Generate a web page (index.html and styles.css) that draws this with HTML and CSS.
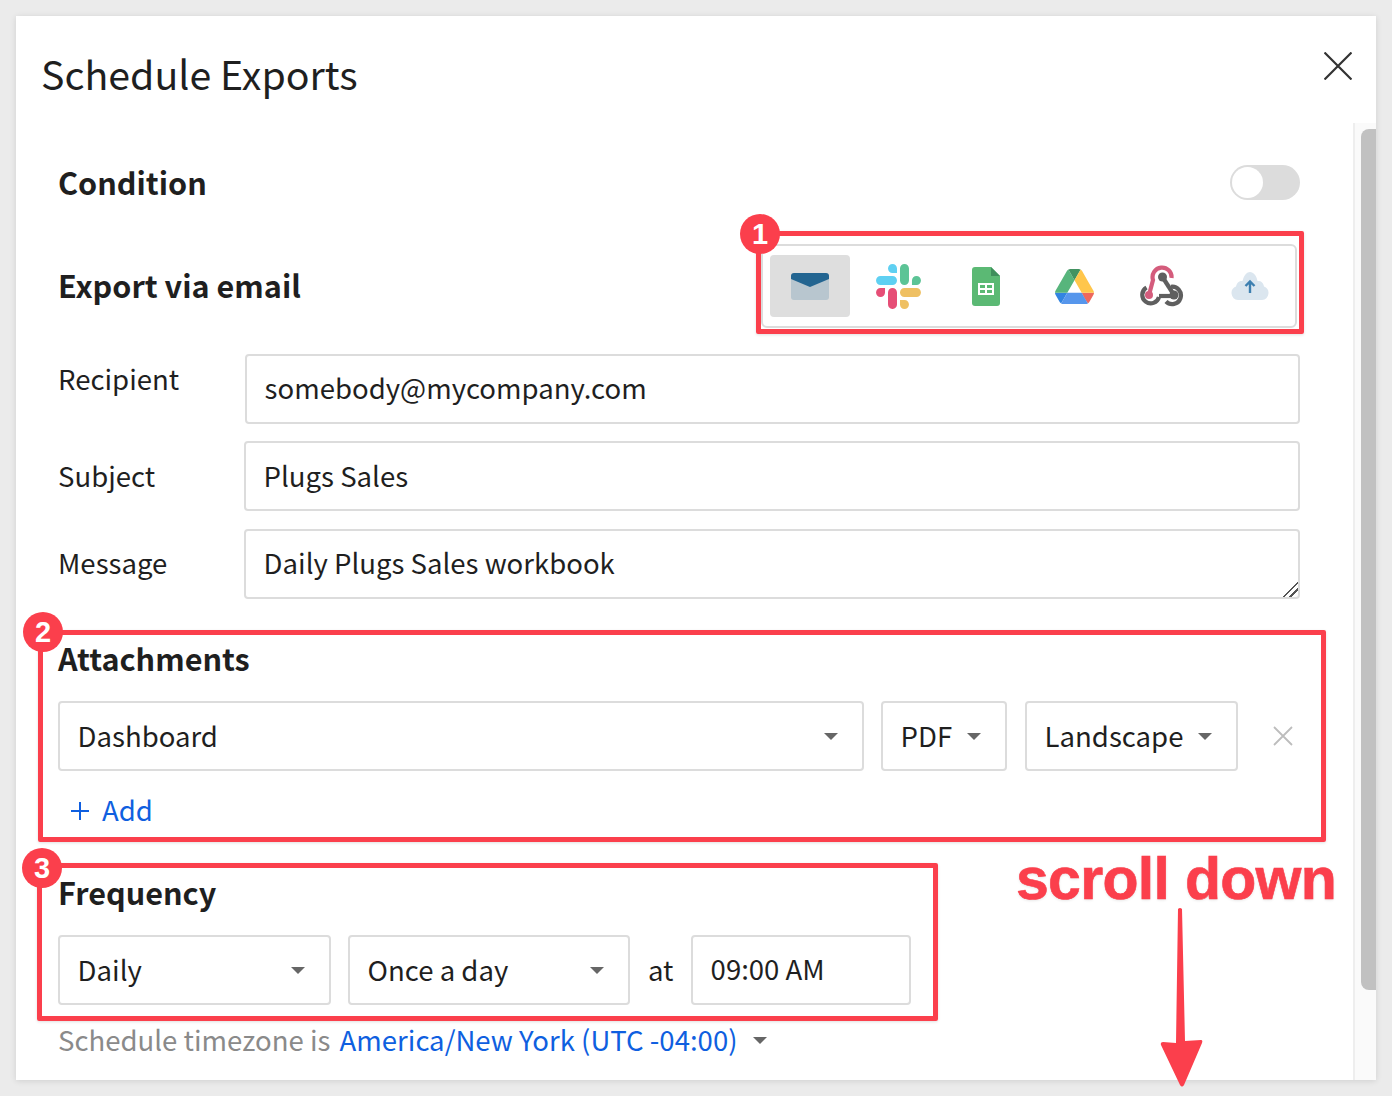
FILE: index.html
```html
<!DOCTYPE html>
<html lang="en">
<head>
  <meta charset="UTF-8" />
  <meta name="viewport" content="width=device-width, initial-scale=1.0" />
  <title>Schedule Exports</title>
  <link rel="stylesheet" href="styles.css">
</head>
<body>
  <div class="modal">
    <div class="modal-head">
      <h1>Schedule Exports</h1>
      <svg class="close" width="28" height="28" viewBox="0 0 28 28"><path d="M0.500 0.500L27.500 27.500M27.500 0.500L0.500 27.500" stroke="#333" stroke-width="2.2" fill="none"/></svg>
    </div>

    <div class="modal-body">
      <div class="content">
        <div class="row-between condition">
          <h2>Condition</h2>
          <div class="toggle"><span class="knob"></span></div>
        </div>

        <div class="row-between export-via">
          <h2>Export via email</h2>
          <div class="channels">
            <div class="channel active">
              <svg width="38" height="27" viewBox="0 0 38 27">
                <rect y="1" width="38" height="26" rx="3" fill="#b8c6cf"/>
                <path d="M3 0H35A3 3 0 0 1 38 3V6L19 14L0 6V3A3 3 0 0 1 3 0Z" fill="#236591"/>
              </svg>
            </div>
            <div class="channel">
              <svg width="45" height="45" viewBox="0 0 2448 2452" opacity="0.85">
                <path d="M897.4 0c-135.3.1-244.8 109.9-244.7 245.2-.1 135.3 109.5 245.1 244.8 245.2h244.8V245.3C1142.3 110 1032.7.2 897.4 0m0 654H244.8C109.5 654.1-.1 763.9 0 899.2c-.2 135.3 109.4 245.1 244.7 245.3h652.7c135.3-.1 244.9-109.9 244.8-245.2.1-135.4-109.5-245.2-244.8-245.3z" fill="#44c8f0"/>
                <path d="M2447.6 899.2c.1-135.3-109.5-245.1-244.8-245.2-135.3.1-244.9 109.9-244.8 245.2v245.3h244.8c135.3-.1 244.9-109.9 244.8-245.3zm-652.7 0V245.2c.1-135.2-109.4-245-244.7-245.2-135.3.1-244.9 109.9-244.8 245.2v654c-.2 135.3 109.4 245.1 244.7 245.3 135.3-.1 244.9-109.9 244.8-245.3z" fill="#40ba84"/>
                <path d="M1550.1 2452c135.3-.1 244.9-109.9 244.8-245.2.1-135.3-109.5-245.1-244.8-245.2h-244.8v245.2c-.1 135.2 109.5 245 244.8 245.2zm0-654.1h652.7c135.3-.1 244.9-109.9 244.8-245.2.2-135.3-109.4-245.1-244.7-245.3h-652.7c-135.3.1-244.9 109.9-244.8 245.2-.1 135.4 109.4 245.2 244.7 245.3z" fill="#edb648"/>
                <path d="M0 1553.2c-.1 135.3 109.5 245.1 244.8 245.2 135.3-.1 244.9-109.9 244.8-245.2v-245.2H244.8c-135.3.1-244.9 109.9-244.8 245.2zm652.7 0v654c-.2 135.3 109.4 245.1 244.7 245.3 135.3-.1 244.9-109.9 244.8-245.2v-653.9c.2-135.3-109.4-245.1-244.7-245.3-135.4 0-244.9 109.8-244.8 245.1z" fill="#e2305f"/>
              </svg>
            </div>
            <div class="channel">
              <svg width="28" height="39" viewBox="0 0 28 39">
                <path d="M3 0H19L28 9V36A3 3 0 0 1 25 39H3A3 3 0 0 1 0 36V3A3 3 0 0 1 3 0Z" fill="#5bb974"/>
                <path d="M19 0L28 9H19Z" fill="#3f8f5c"/>
                <path d="M6 16H22V28H6ZM8 18V21H13V18ZM15 18V21H20V18ZM8 23V26H13V23ZM15 23V26H20V23Z" fill="#fff" fill-rule="evenodd"/>
              </svg>
            </div>
            <div class="channel">
              <svg width="39" height="35" viewBox="0 0 87.3 78" opacity="0.8">
                <path d="m6.6 66.85 3.85 6.65c.8 1.4 1.95 2.5 3.3 3.3l13.75-23.8h-27.5c0 1.55.4 3.1 1.2 4.5z" fill="#0066da"/>
                <path d="m43.65 25-13.75-23.8c-1.35.8-2.5 1.9-3.3 3.3l-25.4 44a9.06 9.06 0 0 0 -1.2 4.5h27.5z" fill="#2ea35c"/>
                <path d="m73.55 76.8c1.35-.8 2.5-1.9 3.3-3.3l1.6-2.75 7.65-13.25c.8-1.4 1.2-2.95 1.2-4.5h-27.502l5.852 11.5z" fill="#ea4335"/>
                <path d="m43.65 25 13.75-23.8c-1.35-.8-2.9-1.2-4.5-1.2h-18.5c-1.6 0-3.15.45-4.5 1.2z" fill="#14783a"/>
                <path d="m59.8 53h-32.3l-13.75 23.8c1.35.8 2.9 1.2 4.5 1.2h50.8c1.6 0 3.15-.45 4.5-1.2z" fill="#2d7de8"/>
                <path d="m73.4 26.5-12.7-22c-.8-1.4-1.95-2.5-3.3-3.3l-13.75 23.8 16.15 28h27.45c0-1.55-.4-3.1-1.2-4.5z" fill="#ffb81f"/>
              </svg>
            </div>
            <div class="channel">
              <svg width="44" height="42" viewBox="0 0 44 42" fill="none" stroke-width="4.2">
                <path d="M31.500 13A9.500 9.500 0 1 0 13 15L9 30" stroke="#d45c7c"/>
                <path d="M22.500 12L34 30" stroke="#5f5f5f"/>
                <path d="M19 31H34" stroke="#5f5f5f"/>
                <path d="M6.500 22.500A8.500 8.500 0 1 0 19 32" stroke="#5f5f5f"/>
                <path d="M31 21.800A8.700 8.700 0 1 1 26 36.500" stroke="#5f5f5f"/>
                <circle cx="22.500" cy="12" r="4.500" fill="#5f5f5f"/>
                <circle cx="34" cy="30" r="4.500" fill="#5f5f5f"/>
                <circle cx="9" cy="30" r="4" fill="#d45c7c"/>
              </svg>
            </div>
            <div class="channel">
              <svg width="38" height="28" viewBox="0 0 38 28">
                <path d="M7 28A7 7 0 0 1 5 14.500C6 10 9 8.500 11.500 9C13 3 16 0 19 0C22.500 0 25.500 3.500 26.500 9C29.500 8.500 32.500 10.500 33 14.500A7 7 0 0 1 31 28Z" fill="#dbe6ef"/>
                <path d="M19 21V10M14.5 14L19 9.5L23.500 14" stroke="#3d7fb0" stroke-width="2.4" fill="none"/>
              </svg>
            </div>
          </div>
        </div>

        <div class="fields">
          <div class="field">
            <label class="raised" for="recipient">Recipient</label>
            <input id="recipient" type="text" value="somebody@mycompany.com" />
          </div>
          <div class="field">
            <label for="subject">Subject</label>
            <input id="subject" type="text" value="Plugs Sales" />
          </div>
          <div class="field message-row">
            <label for="message">Message</label>
            <textarea id="message">Daily Plugs Sales workbook</textarea>
          </div>
        </div>

        <h2 class="attachments-title">Attachments</h2>
        <div class="controls">
          <div class="select w-dashboard">Dashboard<span class="caret"></span></div>
          <div class="select w-pdf">PDF<span class="caret"></span></div>
          <div class="select w-layout">Landscape<span class="caret"></span></div>
          <svg class="remove" width="20" height="20" viewBox="0 0 20 20"><path d="M1 1L19 19M19 1L1 19" stroke="#bdbdbd" stroke-width="1.8" fill="none"/></svg>
        </div>
        <div class="add-link">
          <svg width="18" height="18" viewBox="0 0 18 18"><path d="M9 0V18M0 9H18" stroke="#0f5fe0" stroke-width="2" fill="none"/></svg>
          Add
        </div>

        <h2 class="frequency-title">Frequency</h2>
        <div class="controls">
          <div class="select w-daily">Daily<span class="caret"></span></div>
          <div class="select w-once">Once a day<span class="caret"></span></div>
          <span class="at">at</span>
          <input class="time" type="text" value="09:00 AM" />
        </div>
        <div class="timezone">Schedule timezone is <span class="tz-link">America/New York (UTC -04:00)</span><span class="caret"></span></div>
      </div>

      <div class="scroll-track"><div class="scroll-thumb"></div></div>
    </div>
  </div>

  <!-- annotations painted on top of the screenshot -->
  <div class="mark mark-1"></div>
  <div class="mark mark-2"></div>
  <div class="mark mark-3"></div>
  <div class="badge badge-1">1</div>
  <div class="badge badge-2">2</div>
  <div class="badge badge-3">3</div>
  <div class="scroll-note">scroll down</div>
  <svg class="scroll-arrow" width="44" height="182" viewBox="0 0 44 182">
    <path d="M18 2Q20 0 22 2L25 134L41 133Q43 133 42 136L24 178Q22 181 20 178L1 138Q0 135 3 135L16 136Z" fill="#fb3f4c"/>
  </svg>
</body>
</html>
```

FILE: styles.css
```css
* {
  box-sizing: border-box;
}

body {
  margin: 0;
  padding: 16px;
  height: 1096px;
  overflow: hidden;
  position: relative;
  background: #ebebeb;
  color: #1f1f1f;
  font-family: "Noto Sans CJK SC", "Noto Sans", sans-serif;
  font-size: 27.56px;
}

.modal {
  width: 1360px;
  height: 1064px;
  background: #fff;
  box-shadow: 0 1px 6px rgba(0, 0, 0, 0.12);
  display: flex;
  flex-direction: column;
}

.modal-head {
  height: 107px;
  padding: 0 24px 0 25px;
  display: flex;
  align-items: center;
  justify-content: space-between;
  flex-shrink: 0;
}

.modal-head h1 {
  margin: 6px 0 0;
  font-size: 39.3px;
  font-weight: 400;
  line-height: 60px;
}

.close {
  margin-bottom: 8px;
}

.modal-body {
  flex: 1;
  display: flex;
  min-height: 0;
}

.content {
  flex: 1;
  padding: 42px 53px 0 42px;
}

h2 {
  margin: 0;
  font-size: 30.6px;
  font-weight: 700;
  line-height: 40px;
  padding-bottom: 2px;
}

.row-between {
  display: flex;
  align-items: center;
  justify-content: space-between;
}

.condition {
  height: 35px;
}

.toggle {
  width: 70px;
  height: 35px;
  border-radius: 18px;
  background: #dcdcdc;
  padding: 2px;
}

.knob {
  display: block;
  width: 31px;
  height: 31px;
  border-radius: 50%;
  background: #fff;
}

.export-via {
  height: 84px;
  margin-top: 44px;
}

.channels {
  display: flex;
  gap: 8px;
  width: 536px;
  height: 84px;
  margin-right: 3px;
  padding: 9px 5px 9px 7px;
  border: 2px solid #dcdcdc;
  border-radius: 6px;
}

.channel {
  width: 80px;
  height: 62px;
  display: flex;
  align-items: center;
  justify-content: center;
  border-radius: 4px;
}

.channel.active {
  background: #dedede;
}

.fields {
  margin-top: 26px;
  display: flex;
  flex-direction: column;
  gap: 17px;
}

.field {
  display: flex;
  align-items: center;
}

.field label {
  width: 186px;
  flex-shrink: 0;
  line-height: 40px;
  padding-bottom: 2px;
}

.field label.raised {
  margin-bottom: 20px;
}

.message-row {
  margin-top: 1px;
}

.message-row label {
  padding-bottom: 4px;
}

input,
textarea {
  font: inherit;
  color: inherit;
  height: 70px;
  padding: 0 18px 4px 17.6px;
  border: 2px solid #dcdcdc;
  border-radius: 4px;
  outline: none;
  background: #fff;
}

.field input,
.field textarea {
  flex: 1;
  display: block;
}

#recipient {
  margin-left: 1px;
}

#subject {
  padding-bottom: 2px;
}

.field textarea {
  padding: 11px 18px 0 17.6px;
  line-height: 40px;
  resize: vertical;
}

.field textarea::-webkit-resizer {
  background:
    linear-gradient(135deg, transparent 48%, #555 48%, #555 56%, transparent 56%, transparent 70%, #555 70%, #555 78%, transparent 78%);
}

.attachments-title {
  margin-top: 39px;
}

.frequency-title {
  margin-top: 41px;
}

.controls {
  margin-top: 21px;
  display: flex;
  align-items: center;
  gap: 17px;
}

.select {
  height: 70px;
  padding: 0 18px 2px 17.6px;
  border: 2px solid #dcdcdc;
  border-radius: 4px;
  display: flex;
  align-items: center;
  justify-content: space-between;
  flex-shrink: 0;
}

.caret {
  display: inline-block;
  width: 0;
  height: 0;
  border-left: 7.5px solid transparent;
  border-right: 7.5px solid transparent;
  border-top: 7.5px solid #666;
  margin-top: 3px;
}

.select .caret {
  margin-right: 6px;
}

.w-dashboard { width: 806px; }
.w-pdf { width: 126px; margin-right: 1px; }
.w-layout { width: 213px; }
.w-daily { width: 273px; }
.w-once { width: 282px; }

.remove {
  margin-left: 18px;
}

.add-link {
  margin-top: 20px;
  padding: 0 0 4px 13px;
  height: 40px;
  display: flex;
  align-items: center;
  gap: 13px;
  color: #0f5fe0;
}

.add-link svg {
  margin-top: 4px;
}

.at {
  width: 25px;
  margin: 0 1px;
  flex-shrink: 0;
  padding-bottom: 2px;
}

.time {
  width: 220px;
  flex-shrink: 0;
  padding-left: 17.6px;
}

.timezone {
  margin-top: 16px;
  height: 40px;
  line-height: 40px;
  padding-bottom: 4px;
  color: #8a8a8a;
  display: flex;
  align-items: center;
  white-space: pre;
}

.tz-link {
  color: #0f5fe0;
  margin: 0 16px 0 3px;
}

.scroll-track {
  width: 23px;
  flex-shrink: 0;
  background: #fafafa;
  border-left: 2px solid #eee;
  padding: 6px 0 90px 6px;
}

.scroll-thumb {
  height: 861px;
  background: #c1c1c1;
  border-radius: 8px 0 0 8px;
}

/* red annotations */
.mark {
  position: absolute;
  border: 5px solid #fb3f4c;
  border-radius: 2px;
  box-shadow: 0 1px 3px rgba(0, 0, 0, 0.12);
}

.mark-1 {
  left: 756px;
  top: 231px;
  width: 548px;
  height: 103px;
}

.mark-2 {
  left: 38px;
  top: 630px;
  width: 1288px;
  height: 212px;
}

.mark-3 {
  left: 37px;
  top: 863px;
  width: 901px;
  height: 158px;
}

.badge {
  position: absolute;
  width: 40px;
  height: 40px;
  border-radius: 50%;
  background: #fb3f4c;
  color: #fff;
  font-family: "Liberation Sans", sans-serif;
  font-size: 29px;
  font-weight: 700;
  line-height: 40px;
  text-align: center;
}

.badge-1 {
  left: 740px;
  top: 214px;
}

.badge-2 {
  left: 23px;
  top: 612px;
}

.badge-3 {
  left: 22px;
  top: 848px;
}

.scroll-note {
  position: absolute;
  left: 1016px;
  top: 844px;
  color: #fb3f4c;
  font-family: "Liberation Sans", sans-serif;
  font-size: 59px;
  font-weight: 700;
  letter-spacing: -0.7px;
  line-height: 70px;
  white-space: nowrap;
  -webkit-text-stroke: 0.6px #fb3f4c;
  text-shadow: 0 1px 3px rgba(0, 0, 0, 0.12);
}

.scroll-arrow {
  position: absolute;
  left: 1160px;
  top: 907px;
}
```
